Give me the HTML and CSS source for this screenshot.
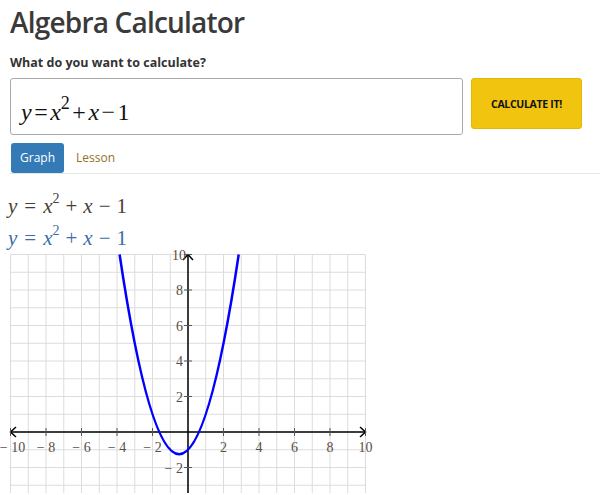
FILE: index.html
```html
<!DOCTYPE html>
<html lang="en">
<head>
    <meta charset="UTF-8">
    <title>Algebra Calculator</title>
    <link rel="stylesheet" href="styles.css">
</head>
<body>
    <div class="page">
        <h1>Algebra Calculator</h1>
        <p class="prompt">What do you want to calculate?</p>

        <div class="calc-row">
            <div class="math-input">
                <span class="v">y</span><span class="op-tight">=</span><span class="v">x</span><sup>2</sup><span class="op-tight">+</span><span class="v">x</span><span class="op-tight">−</span><span>1</span>
            </div>
            <button class="calc-btn">CALCULATE IT!</button>
        </div>

        <div class="tabs">
            <a class="tab active">Graph</a>
            <a class="tab">Lesson</a>
        </div>
    </div>

    <div class="result">
        <div class="eq">
            <span class="v">y</span><span class="rel">=</span><span class="v">x</span><sup>2</sup><span class="bin">+</span><span class="v">x</span><span class="bin">−</span><span>1</span>
        </div>
        <div class="eq blue">
            <span class="v">y</span><span class="rel">=</span><span class="v">x</span><sup>2</sup><span class="bin">+</span><span class="v">x</span><span class="bin">−</span><span>1</span>
        </div>

        <svg class="graph" width="380" height="244" viewBox="0 0 380 244">
            <g id="grid" stroke="#dcdcdc" stroke-width="1"></g>
            <g id="axes" stroke="#000" stroke-width="1.5" fill="none">
                <line x1="10.5" y1="183" x2="365.5" y2="183"/>
                <line x1="188" y1="5.5" x2="188" y2="360.5"/>
                <polyline points="16,178 10.5,183 16,188"/>
                <polyline points="360,178 365.5,183 360,188"/>
                <polyline points="183,11 188,5.5 193,11"/>
            </g>
            <g id="ticks" stroke="#555" stroke-width="1"></g>
            <g id="labels" class="labels"></g>
            <path d="M119.6 5.5 Q179.1 404.9 238.7 5.5" stroke="#0000ff" stroke-width="2.5" fill="none"/>
        </svg>
    </div>

    <script>
        // draw grid, ticks and numbers of the coordinate plane
        const ns = 'http://www.w3.org/2000/svg';
        const unit = 17.75, ox = 188, oy = 183;
        const grid = document.getElementById('grid');
        const ticks = document.getElementById('ticks');
        const labels = document.getElementById('labels');

        function el(name, attrs, parent) {
            const e = document.createElementNS(ns, name);
            for (const k in attrs) e.setAttribute(k, attrs[k]);
            parent.appendChild(e);
            return e;
        }

        for (let k = -10; k <= 10; k++) {
            const x = ox + k * unit;
            const y = oy - k * unit;
            el('line', { x1: x, y1: 5.5, x2: x, y2: 360.5 }, grid);
            el('line', { x1: 10.5, y1: y, x2: 365.5, y2: y }, grid);

            if (k === 0 || k % 2 !== 0) continue;
            const txt = k < 0 ? '− ' + (-k) : String(k);

            el('line', { x1: x, y1: oy - 4, x2: x, y2: oy + 4 }, ticks);
            el('text', { x: k === -10 ? x + 2 : x, y: oy + 20, 'text-anchor': 'middle' }, labels).textContent = txt;

            el('line', { x1: ox - 4, y1: y, x2: ox + 4, y2: y }, ticks);
            if (k < -2) continue; // below the visible part
            el('text', { x: k === 10 ? ox - 2 : ox - 5, y: y + 5, 'text-anchor': 'end' }, labels).textContent = txt;
        }
    </script>
</body>
</html>
```

FILE: styles.css
```css
body {
    margin: 0;
    font-family: "Open Sans", Arial, sans-serif;
    color: #333;
    overflow: hidden;
}
.page {
    padding: 0 0 0 10px;
}
h1 {
    margin: 0;
    padding-top: 3px;
    font-size: 28px;
    font-weight: 600;
    letter-spacing: -0.8px;
    line-height: 38px;
    color: #3a3a3a;
}
.prompt {
    margin: 14px 0 0;
    font-size: 12.5px;
    font-weight: bold;
    line-height: 16px;
}
.calc-row {
    display: flex;
    align-items: flex-start;
    gap: 8px;
    margin-top: 7px;
}
.math-input {
    width: 453px;
    height: 57px;
    box-sizing: border-box;
    border: 1px solid #aaa;
    border-radius: 3px;
    padding: 18px 0 0 10px;
    font-family: "Liberation Serif", "Times New Roman", serif;
    font-size: 24px;
    color: #111;
    line-height: 30px;
}
.math-input sup {
    font-size: 18px;
    vertical-align: 11px;
    line-height: 0;
}
.op-tight {
    margin: 0 2.5px;
}
.v {
    font-style: italic;
}
.calc-btn {
    width: 111px;
    height: 51px;
    background-color: #f1c40f;
    border: 1px solid #e2b709;
    border-radius: 3px;
    font-family: "Open Sans", Arial, sans-serif;
    font-size: 10.5px;
    font-weight: bold;
    letter-spacing: -0.3px;
    color: #111;
    cursor: pointer;
}
.tabs {
    display: flex;
    align-items: center;
    margin-top: 8px;
    border-bottom: 1px solid #e6e6e6;
}
.tab {
    padding: 8px 12px;
    font-size: 12px;
    line-height: 14px;
    color: #94712a;
}
.tab.active {
    padding: 8px 9px;
    background-color: #337ab7;
    color: #fff;
    margin-left: 1px;
    border-radius: 3px;
}
.result {
    padding-top: 16px;
}
.eq {
    padding-left: 8px;
    font-family: "Liberation Serif", "Times New Roman", serif;
    font-size: 21px;
    line-height: 32px;
    color: #4a3e35;
}
.eq.blue {
    color: #3a6ea5;
}
.eq sup {
    font-size: 14px;
    vertical-align: 10px;
    line-height: 0;
}
.rel {
    margin: 0 7px;
}
.bin {
    margin: 0 6px;
}
.graph {
    display: block;
    margin-top: -5px;
}
.labels {
    font-family: "Liberation Serif", "Times New Roman", serif;
    font-size: 14px;
    fill: #5a4d42;
}
```
